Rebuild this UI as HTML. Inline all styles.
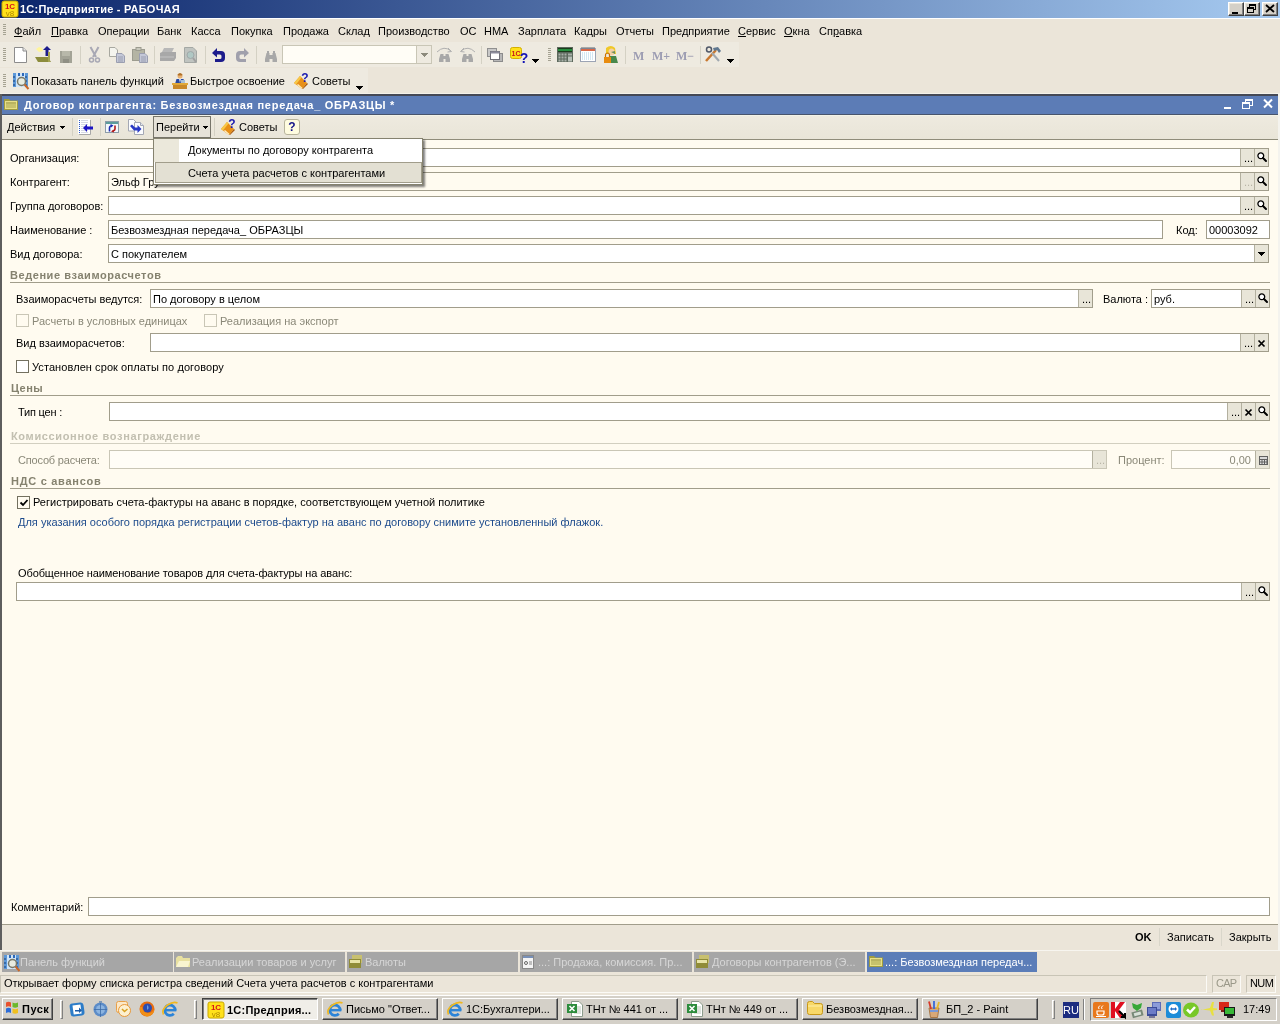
<!DOCTYPE html>
<html lang="ru"><head><meta charset="utf-8"><title>1С:Предприятие - РАБОЧАЯ</title>
<style>
*{box-sizing:border-box}
html,body{margin:0;padding:0}
body{will-change:transform;width:1280px;height:1024px;position:relative;overflow:hidden;background:#ebe5d9;font:11px "Liberation Sans",sans-serif;color:#000}
.a{position:absolute;white-space:nowrap}
.t{position:absolute;white-space:nowrap;line-height:13px;height:13px}
.b{font-weight:bold}
u{text-decoration:underline;text-underline-offset:1px}
svg{position:absolute;overflow:visible}
.wb{position:absolute;top:2px;width:16px;height:14px;background:#d4d0c8;border:1px solid;border-color:#fff #404040 #404040 #fff;box-shadow:inset -1px -1px 0 #808080,inset 1px 1px 0 #ebe5d9}
.grip{position:absolute;width:3px;background:repeating-linear-gradient(180deg,#a5a292 0 1px,transparent 1px 2px)}
.vsep{position:absolute;width:1px;background:#d4d1c4}
.in{position:absolute;background:#fff;border:1px solid #a19d8b;height:19px}
.in.dis{background:#fffdf7;border-color:#c9c6b6}
.in .tx{position:absolute;left:2px;top:3px;line-height:13px;white-space:nowrap}
.btn{position:absolute;top:0;width:15px;height:17px;background:#e8e5d8;border-left:1px solid #b3b09f;text-align:center;line-height:17px;font-size:11px;overflow:hidden}
.sect{position:absolute;font-weight:bold;color:#85826f;line-height:13px;white-space:nowrap}
.hr{position:absolute;height:1px;background:#a19d8b}
.cb{position:absolute;width:13px;height:13px;background:#fff;border:1px solid #73705f}
.cb.dis{border-color:#c9c6b6;background:#fffbf0}
.tab{position:absolute;top:952px;height:20px;background:#a6a6a6;color:#d6d6d6;line-height:20px;overflow:hidden;white-space:nowrap}
.tab span{position:absolute;top:0}
.tk{position:absolute;top:998px;width:116px;height:22px;background:#d4d0c8;border:1px solid;border-color:#fff #404040 #404040 #fff;box-shadow:inset -1px -1px 0 #808080;white-space:nowrap;overflow:hidden}
.tk span{position:absolute;left:23px;top:4px;line-height:13px}
.sunk{position:absolute;border:1px solid;border-color:#c8c4b6 #fbfaf6 #fbfaf6 #c8c4b6}
</style></head><body>
<!-- main window title -->
<div class="a" style="left:0;top:0;width:1280px;height:18px;background:linear-gradient(90deg,#0a246a 0%,#a6caf0 100%)"></div>
<svg style="left:2px;top:1px" width="16" height="16" viewBox="0 0 16 16" ><rect x="0" y="0" width="16" height="16" rx="2" fill="#ffe11a" stroke="#c9a800" stroke-width="1"/><text x="8.0" y="7.5" font-family="Liberation Sans,sans-serif" font-weight="bold" font-size="8" fill="#d8121a" text-anchor="middle">1C</text><text x="8.0" y="14.5" font-family="Liberation Sans,sans-serif" font-size="8" fill="#b08a00" text-anchor="middle">v8</text></svg>
<div class="t b" style="left:20px;top:3px;color:#fff;letter-spacing:.23px" id="ttl">1С:Предприятие - РАБОЧАЯ</div>
<div class="wb" style="left:1228px"><div class="a" style="left:3px;top:9px;width:6px;height:2px;background:#000"></div></div>
<div class="wb" style="left:1244px"><div class="a" style="left:4px;top:1px;width:7px;height:6px;border:1px solid #000;border-top-width:2px"></div><div class="a" style="left:2px;top:4px;width:7px;height:6px;border:1px solid #000;border-top-width:2px;background:#d4d0c8"></div></div>
<div class="wb" style="left:1262px"><svg style="left:3px;top:2px" width="8" height="7" viewBox="0 0 8 7" ><path d="M0 0l8 7M8 0l-8 7" stroke="#000" stroke-width="1.800"/></svg></div>
<!-- menu bar -->
<div class="a" style="left:0;top:18px;width:1280px;height:1px;background:#fff"></div>
<div class="grip" style="left:3px;top:24px;height:12px"></div>
<div class="t" style="left:14px;top:25px" id="m0"><u>Ф</u>айл</div>
<div class="t" style="left:51px;top:25px" id="m1"><u>П</u>равка</div>
<div class="t" style="left:98px;top:25px" id="m2">Операции</div>
<div class="t" style="left:157px;top:25px" id="m3">Банк</div>
<div class="t" style="left:191px;top:25px" id="m4">Касса</div>
<div class="t" style="left:231px;top:25px" id="m5">Покупка</div>
<div class="t" style="left:283px;top:25px" id="m6">Продажа</div>
<div class="t" style="left:338px;top:25px" id="m7">Склад</div>
<div class="t" style="left:378px;top:25px" id="m8">Производство</div>
<div class="t" style="left:460px;top:25px" id="m9">ОС</div>
<div class="t" style="left:484px;top:25px" id="m10">НМА</div>
<div class="t" style="left:518px;top:25px" id="m11">Зарплата</div>
<div class="t" style="left:574px;top:25px" id="m12">Кадры</div>
<div class="t" style="left:616px;top:25px" id="m13">Отчеты</div>
<div class="t" style="left:662px;top:25px" id="m14">Предприятие</div>
<div class="t" style="left:738px;top:25px" id="m15"><u>С</u>ервис</div>
<div class="t" style="left:784px;top:25px" id="m16"><u>О</u>кна</div>
<div class="t" style="left:819px;top:25px" id="m17">Сп<u>р</u>авка</div>
<!-- toolbar 1 -->
<div class="a" style="left:0;top:42px;width:739px;height:25px;background:#eeeae0"></div>
<div class="grip" style="left:3px;top:48px;height:13px"></div>
<svg style="left:14px;top:47px" width="13" height="16" viewBox="0 0 13 16" ><path d="M0.5 0.5H9L12.5 4V15.5H0.5Z" fill="#fff" stroke="#8c8c8c"/><path d="M9 0.5V4H12.5" fill="#e8e8e8" stroke="#8c8c8c"/></svg>
<svg style="left:35px;top:46px" width="17" height="17" viewBox="0 0 17 17" ><path d="M1 3l3-2 3 1 1 3-4 1z" fill="#fff59a"/><path d="M12 0l4 4h-2.5v6h-3V4H8z" fill="#1c1c8c"/><path d="M0 11h13l3 5H3z" fill="#8c8c3c"/><path d="M13 11V6h2v10h-2z" fill="#a5a550"/></svg>
<svg style="left:60px;top:51px" width="12" height="12" viewBox="0 0 12 12" ><rect x="0" y="0" width="12" height="12" fill="#a3a396"/><rect x="2" y="0" width="8" height="5" fill="#b8b8aa"/><rect x="3" y="8" width="6" height="4" fill="#8f8f84"/></svg>
<div class="vsep" style="left:80px;top:46px;height:18px"></div>
<svg style="left:89px;top:47px" width="11" height="16" viewBox="0 0 11 16" ><path d="M1.5 0L7 10M9.5 0L4 10" stroke="#a8a8b4" stroke-width="2" fill="none"/><circle cx="2.5" cy="13" r="2" fill="none" stroke="#a8a8b4" stroke-width="1.5"/><circle cx="8.5" cy="13" r="2" fill="none" stroke="#a8a8b4" stroke-width="1.5"/></svg>
<svg style="left:109px;top:47px" width="16" height="16" viewBox="0 0 16 16" ><path d="M0.5 0.5H6L8.5 3V9.5H0.5Z" fill="#f4f4ee" stroke="#a8a8a0"/><path d="M7.500 6.500H13L15.500 9V15.500H7.500Z" fill="#c4c8d8" stroke="#9a9eb0"/><path d="M9 10h5M9 12h5M9 14h5" stroke="#9a9eb0"/></svg>
<svg style="left:132px;top:47px" width="16" height="16" viewBox="0 0 16 16" ><rect x="0.5" y="2.500" width="12" height="11" fill="#b4b4a4" stroke="#9c9c90"/><rect x="4" y="0.5" width="5" height="3" fill="#c8c8bc" stroke="#9c9c90"/><path d="M7.500 6.500H13L15.500 9V15.500H7.500Z" fill="#c4c8d8" stroke="#9a9eb0"/><path d="M9 10h5M9 12h5M9 14h5" stroke="#9a9eb0"/></svg>
<div class="vsep" style="left:154px;top:46px;height:18px"></div>
<svg style="left:160px;top:48px" width="16" height="13" viewBox="0 0 16 13" ><path d="M4 0h10l-2 4H2z" fill="#b8b8b8"/><path d="M0 5l2-1h14v6l-2 3H0z" fill="#a8a8a8"/><path d="M0 9h14" stroke="#c4c4c4"/></svg>
<svg style="left:184px;top:47px" width="13" height="16" viewBox="0 0 13 16" ><path d="M0.5 0.5H9L12.5 4V15.5H0.5Z" fill="#c0c4c0" stroke="#a4a8a4"/><circle cx="6.500" cy="8" r="3.500" fill="#b0c8c4" stroke="#a0a8a8"/><path d="M9 11l3 4" stroke="#a0a0a0" stroke-width="2"/></svg>
<div class="vsep" style="left:205px;top:46px;height:18px"></div>
<svg style="left:212px;top:48px" width="13" height="14" viewBox="0 0 13 14" ><path d="M5 0v3h4a4 4 0 0 1 4 4v3a4 4 0 0 1-4 4H3v-3h5a1.500 1.500 0 0 0 1.500-1.500v-1.500a1.500 1.500 0 0 0-1.500-1.500H5v3L0 5z" fill="#1c1c8c"/></svg>
<svg style="left:236px;top:48px" width="13" height="14" viewBox="0 0 13 14" ><g transform="translate(13 0) scale(-1 1)"><path d="M5 0v3h4a4 4 0 0 1 4 4v3a4 4 0 0 1-4 4H3v-3h5a1.500 1.500 0 0 0 1.500-1.500v-1.500a1.500 1.500 0 0 0-1.500-1.500H5v3L0 5z" fill="#a0a0ac"/></g></svg>
<div class="vsep" style="left:256px;top:46px;height:18px"></div>
<svg style="left:265px;top:51px" width="12" height="11" viewBox="0 0 12 11" ><path d="M1.500 2h3v2h3V2h3l1.500 6v3H7.500V8h-3v3H0V8z" fill="#a8a8a8"/><rect x="2" y="0" width="2" height="2" fill="#a8a8a8"/><rect x="8" y="0" width="2" height="2" fill="#a8a8a8"/></svg>
<div class="a" style="left:282px;top:45px;width:150px;height:19px;background:#fffdf6;border:1px solid #c9c6b6"><div class="a" style="right:0;top:0;width:15px;height:17px;background:#eeeae0;border-left:1px solid #c9c6b6"></div></div>
<svg style="left:421px;top:53px" width="7" height="4" viewBox="0 0 7 4" shape-rendering="crispEdges"><path d="M0 0h7l-3.5 4z" fill="#8c8a7c"/></svg>
<svg style="left:436px;top:47px" width="17" height="15" viewBox="0 0 17 15" ><path d="M1 5Q8 -2 15 4" fill="none" stroke="#b0b0b0"/><path d="M12 1l3.500 3.500-4 0.500" fill="none" stroke="#b0b0b0"/><g transform="translate(3 5)"><path d="M1.500 2h3v2h2V2h3l1.500 5v3H6.500V7h-2v3H0V7z" fill="#a8a8a8"/></g></svg>
<svg style="left:459px;top:47px" width="17" height="15" viewBox="0 0 17 15" ><g transform="translate(17 0) scale(-1 1)"><path d="M1 5Q8 -2 15 4" fill="none" stroke="#b0b0b0"/><path d="M12 1l3.500 3.500-4 0.500" fill="none" stroke="#b0b0b0"/></g><g transform="translate(3 5)"><path d="M1.500 2h3v2h2V2h3l1.500 5v3H6.500V7h-2v3H0V7z" fill="#a8a8a8"/></g></svg>
<div class="vsep" style="left:481px;top:46px;height:18px"></div>
<svg style="left:487px;top:48px" width="16" height="14" viewBox="0 0 16 14" ><rect x="0.5" y="0.5" width="9" height="8" fill="#c8c8c8" stroke="#909090"/><rect x="6.500" y="5.500" width="9" height="8" fill="#b8b8b8" stroke="#8c8c8c"/><rect x="3.500" y="3.500" width="9" height="8" fill="#fff" stroke="#707078"/><rect x="3.500" y="3.500" width="9" height="2" fill="#8c8c9c"/></svg>
<svg style="left:510px;top:47px" width="18" height="16" viewBox="0 0 18 16" ><rect x="0.5" y="0.5" width="11" height="11" rx="2" fill="#ffe11a" stroke="#d4b000"/><text x="6" y="8.500" font-family="Liberation Sans,sans-serif" font-weight="bold" font-size="7" fill="#c8141c" text-anchor="middle">1C</text><text x="14" y="15.500" font-family="Liberation Sans,sans-serif" font-weight="bold" font-size="14" fill="#1414b4" text-anchor="middle">?</text></svg>
<svg style="left:532px;top:59px" width="7" height="4" viewBox="0 0 7 4" shape-rendering="crispEdges"><path d="M0 0h7l-3.5 4z" fill="#000"/></svg>
<div class="grip" style="left:548px;top:48px;height:13px"></div>
<svg style="left:557px;top:47px" width="16" height="15" viewBox="0 0 16 15" ><rect x="0" y="0" width="16" height="15" fill="#5c685c"/><rect x="1" y="1" width="14" height="4" fill="#1c3c1c"/><path d="M2 2v2M4 2v2M6 2v2M8 2v2M10 2v2M12 2v2M14 2v2" stroke="#30e060"/><rect x="1.5" y="6.5" width="2" height="2" fill="#a8b0a8"/><rect x="4.5" y="6.5" width="2" height="2" fill="#a8b0a8"/><rect x="7.5" y="6.5" width="2" height="2" fill="#a8b0a8"/><rect x="1.5" y="9.5" width="2" height="2" fill="#a8b0a8"/><rect x="4.5" y="9.5" width="2" height="2" fill="#a8b0a8"/><rect x="7.5" y="9.5" width="2" height="2" fill="#a8b0a8"/><rect x="1.5" y="12.5" width="2" height="2" fill="#a8b0a8"/><rect x="4.5" y="12.5" width="2" height="2" fill="#a8b0a8"/><rect x="7.5" y="12.5" width="2" height="2" fill="#a8b0a8"/><rect x="11" y="6.500" width="4" height="2" fill="#a8b0a8"/><rect x="11" y="9.500" width="4" height="5" fill="#b8c0b8"/></svg>
<svg style="left:580px;top:47px" width="16" height="15" viewBox="0 0 16 15" ><rect x="0.5" y="1.500" width="15" height="13" fill="#fff" stroke="#9ca4b4"/><rect x="1" y="2" width="14" height="2" fill="#d86848"/><path d="M2 0v2M4 0v2M6 0v2M8 0v2M10 0v2M12 0v2M14 0v2" stroke="#606870"/><rect x="2" y="5.5" width="1" height="1" fill="#a8d0e8"/><rect x="4" y="5.5" width="1" height="1" fill="#a8d0e8"/><rect x="6" y="5.5" width="1" height="1" fill="#a8d0e8"/><rect x="8" y="5.5" width="1" height="1" fill="#a8d0e8"/><rect x="10" y="5.5" width="1" height="1" fill="#a8d0e8"/><rect x="12" y="5.5" width="1" height="1" fill="#a8d0e8"/><rect x="2" y="7.5" width="1" height="1" fill="#a8d0e8"/><rect x="4" y="7.5" width="1" height="1" fill="#a8d0e8"/><rect x="6" y="7.5" width="1" height="1" fill="#a8d0e8"/><rect x="8" y="7.5" width="1" height="1" fill="#a8d0e8"/><rect x="10" y="7.5" width="1" height="1" fill="#a8d0e8"/><rect x="12" y="7.5" width="1" height="1" fill="#a8d0e8"/><rect x="2" y="9.5" width="1" height="1" fill="#a8d0e8"/><rect x="4" y="9.5" width="1" height="1" fill="#a8d0e8"/><rect x="6" y="9.5" width="1" height="1" fill="#a8d0e8"/><rect x="8" y="9.5" width="1" height="1" fill="#a8d0e8"/><rect x="10" y="9.5" width="1" height="1" fill="#a8d0e8"/><rect x="12" y="9.5" width="1" height="1" fill="#a8d0e8"/><rect x="2" y="11.5" width="1" height="1" fill="#a8d0e8"/><rect x="4" y="11.5" width="1" height="1" fill="#a8d0e8"/><rect x="6" y="11.5" width="1" height="1" fill="#a8d0e8"/><rect x="8" y="11.5" width="1" height="1" fill="#a8d0e8"/><rect x="10" y="11.5" width="1" height="1" fill="#a8d0e8"/><rect x="12" y="11.5" width="1" height="1" fill="#a8d0e8"/></svg>
<svg style="left:603px;top:46px" width="15" height="17" viewBox="0 0 15 17" ><path d="M3 2q5-4 9 0l1 6H3z" fill="#f0c828"/><ellipse cx="8.500" cy="6" rx="3" ry="3.500" fill="#f4d0a8"/><path d="M8 6l4-1v3z" fill="#70905c"/><path d="M6 10h7l2 7H6z" fill="#48884c"/><rect x="1" y="11" width="7" height="6" fill="#e88c10"/><path d="M2.500 11v-2a2 2 0 0 1 4 0v2" fill="none" stroke="#c87008" stroke-width="1.200"/></svg>
<div class="vsep" style="left:625px;top:46px;height:18px"></div>
<div class="t b" style="left:633px;top:49px;font:bold 12px 'Liberation Serif',serif;color:#9c9cb2">M</div>
<div class="t b" style="left:652px;top:49px;font:bold 12px 'Liberation Serif',serif;color:#9c9cb2">M+</div>
<div class="t b" style="left:676px;top:49px;font:bold 12px 'Liberation Serif',serif;color:#9c9cb2">M−</div>
<div class="vsep" style="left:700px;top:46px;height:18px"></div>
<svg style="left:705px;top:46px" width="17" height="16" viewBox="0 0 17 16" ><path d="M1 15L11 4" stroke="#c87830" stroke-width="2.500"/><path d="M8 2l5-1 3 4-2 2-2-3-3 1z" fill="#607890"/><path d="M14 15L7 7" stroke="#a0a8b0" stroke-width="2"/><circle cx="4" cy="3.500" r="2.500" fill="none" stroke="#505868" stroke-width="1.500"/></svg>
<svg style="left:727px;top:59px" width="7" height="4" viewBox="0 0 7 4" shape-rendering="crispEdges"><path d="M0 0h7l-3.5 4z" fill="#000"/></svg>
<!-- toolbar 2 -->
<div class="a" style="left:0;top:68px;width:368px;height:25px;background:#eeeae0"></div>
<div class="grip" style="left:3px;top:74px;height:13px"></div>
<svg style="left:13px;top:73px" width="16" height="17" viewBox="0 0 16 17" ><rect x="0" y="0" width="15" height="14" fill="#cfe4f8"/><rect x="0" y="0" width="3" height="14" fill="#5c98d8"/><rect x="12" y="0" width="3" height="14" fill="#5c98d8"/><rect x="5" y="0" width="2" height="3" fill="#2c68b8"/><rect x="9" y="0" width="2" height="3" fill="#2c68b8"/><path d="M1 3v2M1 7v2M1 11v2M13 3v2M13 7v2M13 11v2" stroke="#143c78"/><circle cx="8.500" cy="8.500" r="4" fill="#e8ece0" stroke="#787868" stroke-width="1.500"/><path d="M11.500 11.500L15.500 16" stroke="#c86828" stroke-width="2"/></svg>
<div class="t" style="left:31px;top:75px" id="tb2a">Показать панель функций</div>
<svg style="left:172px;top:73px" width="16" height="16" viewBox="0 0 16 16" ><circle cx="8" cy="3" r="2.500" fill="#e8b070"/><path d="M5.500 1.500q2.500-3 5 0l-0.500 1h-4z" fill="#b07028"/><path d="M3 11l1.500-5h7L13 11z" fill="#2848a0"/><path d="M7 6l1 4 1-4z" fill="#d8e4f4"/><rect x="0" y="10" width="16" height="2" fill="#e0a838"/><rect x="1" y="12" width="14" height="4" fill="#c88828"/><rect x="9" y="7" width="4" height="3" fill="#a8c0d8"/></svg>
<div class="t" style="left:190px;top:75px" id="tb2b">Быстрое освоение</div>
<svg style="left:294px;top:73px" width="16" height="16" viewBox="0 0 16 16" ><path d="M0 10L6 3l7 7-5 6z" fill="#e89018"/><path d="M0 10l6-7 1.500 1.500L2 11.500z" fill="#f8c848"/><path d="M8 16l5-6 1 1-5 5z" fill="#a85808"/><path d="M3 12l5 4 0.500-1-4.500-4z" fill="#fff0c0"/><text x="11" y="9" font-family="Liberation Sans,sans-serif" font-weight="bold" font-size="12" fill="#1818b0" text-anchor="middle">?</text></svg>
<div class="t" style="left:312px;top:75px" id="tb2c">Советы</div>
<svg style="left:356px;top:86px" width="7" height="4" viewBox="0 0 7 4" shape-rendering="crispEdges"><path d="M0 0h7l-3.5 4z" fill="#000"/></svg>
<!-- inner window -->
<div class="a" style="left:0;top:93px;width:1280px;height:1px;background:#f4f2ea"></div>
<div class="a" style="left:0;top:94px;width:1278px;height:2px;background:#454955"></div>
<div class="a" style="left:0;top:94px;width:2px;height:856px;background:#5e5e5e"></div>
<div class="a" style="left:1278px;top:94px;width:2px;height:856px;background:#f4f3ee"></div>
<div class="a" style="left:2px;top:96px;width:1276px;height:19px;background:#5c7cb6;border-bottom:1px solid #48546c"></div>
<svg style="left:4px;top:98px" width="14" height="12" viewBox="0 0 14 12" ><path d="M0 1h5l1.500 1.500H14V12H0z" fill="#a09c40"/><rect x="1" y="3" width="12" height="8" fill="#e8e088"/><rect x="2" y="4.500" width="10" height="1" fill="#8c8838"/><rect x="2" y="6.500" width="10" height="1" fill="#a8a450"/><rect x="2" y="8.500" width="10" height="1" fill="#a8a450"/></svg>
<div class="t b" style="left:24px;top:99px;color:#fff;letter-spacing:.72px" id="ittl">Договор контрагента: Безвозмездная передача_ ОБРАЗЦЫ *</div>
<div class="a" style="left:1224px;top:107px;width:7px;height:2px;background:#fff"></div>
<div class="a" style="left:1245px;top:99px;width:8px;height:7px;border:1px solid #fff;border-top-width:2px"></div><div class="a" style="left:1242px;top:102px;width:8px;height:7px;border:1px solid #fff;border-top-width:2px;background:#5b7db8"></div>
<svg style="left:1263px;top:99px" width="10" height="9" viewBox="0 0 10 9" ><path d="M1 0.5l8 8M9 0.5l-8 8" stroke="#fff" stroke-width="2"/></svg>
<div class="a" style="left:2px;top:115px;width:1276px;height:25px;background:linear-gradient(180deg,#eeeadf 0%,#e9e5d8 100%);border-top:1px solid #f3f3e8;border-bottom:1px solid #8f8c7a"></div>
<div class="t" style="left:7px;top:121px" id="ft1">Действия</div>
<svg style="left:60px;top:126px" width="5" height="3" viewBox="0 0 5 3" shape-rendering="crispEdges"><path d="M0 0h5l-2.5 3z" fill="#000"/></svg>
<div class="vsep" style="left:72px;top:118px;height:18px"></div>
<svg style="left:77px;top:119px" width="16" height="16" viewBox="0 0 16 16" ><rect x="1" y="0" width="12" height="15" fill="#fff"/><path d="M13.500 1v14.500H2" fill="none" stroke="#a8a8a8"/><rect x="2" y="1" width="1" height="1" fill="#2c58c8"/><rect x="4" y="1" width="7" height="1" fill="#d4d8e4"/><rect x="2" y="3" width="1" height="1" fill="#2c58c8"/><rect x="4" y="3" width="7" height="1" fill="#d4d8e4"/><rect x="2" y="5" width="1" height="1" fill="#2c58c8"/><rect x="4" y="5" width="7" height="1" fill="#d4d8e4"/><rect x="2" y="7" width="1" height="1" fill="#2c58c8"/><rect x="4" y="7" width="7" height="1" fill="#d4d8e4"/><rect x="2" y="9" width="1" height="1" fill="#2c58c8"/><rect x="4" y="9" width="7" height="1" fill="#d4d8e4"/><rect x="2" y="11" width="1" height="1" fill="#2c58c8"/><rect x="4" y="11" width="7" height="1" fill="#d4d8e4"/><rect x="2" y="13" width="1" height="1" fill="#2c58c8"/><rect x="4" y="13" width="7" height="1" fill="#d4d8e4"/><path d="M6 9l4-4v2.500h6v3h-6V13z" fill="#1c14c4"/></svg>
<div class="vsep" style="left:100px;top:118px;height:18px"></div>
<svg style="left:105px;top:121px" width="14" height="12" viewBox="0 0 14 12" ><rect x="0.500" y="0.500" width="13" height="11" fill="#f4f8fc" stroke="#8c9ca8"/><rect x="1" y="1" width="12" height="2" fill="#5c9c9c"/><path d="M4.500 10.500V7q0-2 2.500-2.500" fill="none" stroke="#1c2cb4" stroke-width="1.600"/><path d="M5.500 3l3 1.500-2.500 2z" fill="#1c2cb4"/><path d="M10 4.500V8q0 1.500-2 2" fill="none" stroke="#b01818" stroke-width="1.600"/><path d="M9 11.500l-3-1 2.500-2z" fill="#b01818"/></svg>
<svg style="left:128px;top:119px" width="16" height="16" viewBox="0 0 16 16" ><path d="M0.500 0.500H5.500L8 3V12H0.500Z" fill="#fbfcfe" stroke="#a4a8b4"/><path d="M6.500 3.500H12.500L15.500 6.500V15.500H6.500Z" fill="#fbfcfe" stroke="#a4a8b4"/><path d="M12.500 3.500V6.500H15.500" fill="#e4e8f0" stroke="#a4a8b4"/><path d="M2 7l2-1.500 3 3h2.500V6l4 4-4 4v-2.500H6z" fill="#2838c4"/></svg>
<div class="a" style="left:153px;top:116px;width:58px;height:22px;background:#e6e2d8;border:1px solid #77756a"></div>
<div class="t" style="left:156px;top:121px" id="ft2">Перейти</div>
<svg style="left:203px;top:126px" width="5" height="3" viewBox="0 0 5 3" shape-rendering="crispEdges"><path d="M0 0h5l-2.5 3z" fill="#000"/></svg>
<div class="vsep" style="left:214px;top:118px;height:18px"></div>
<svg style="left:221px;top:119px" width="16" height="16" viewBox="0 0 16 16" ><path d="M0 10L6 3l7 7-5 6z" fill="#e89018"/><path d="M0 10l6-7 1.500 1.500L2 11.500z" fill="#f8c848"/><path d="M8 16l5-6 1 1-5 5z" fill="#a85808"/><path d="M3 12l5 4 0.500-1-4.500-4z" fill="#fff0c0"/><text x="11" y="9" font-family="Liberation Sans,sans-serif" font-weight="bold" font-size="12" fill="#1818b0" text-anchor="middle">?</text></svg>
<div class="t" style="left:239px;top:121px" id="ft3">Советы</div>
<div class="a" style="left:284px;top:119px;width:16px;height:16px;background:#fffce0;border:1px solid #b8b49c;border-radius:3px;text-align:center;line-height:14px;font-weight:bold;font-size:12px;color:#141488">?</div>
<div class="a" style="left:2px;top:140px;width:1276px;height:784px;background:#fffbf0"></div>
<div class="t" style="left:10px;top:152px" id="l1">Организация:</div>
<div class="in" style="left:108px;top:148px;width:1161px;height:19px"><div class="btn" style="left:1131px;width:14px"><span style="position:absolute;left:3px;top:1px">...</span></div><div class="btn" style="left:1145px;width:14px"><svg style="left:2px;top:3px" width="10" height="10" viewBox="0 0 10 10" ><circle cx="3.800" cy="3.800" r="2.900" fill="#fff" stroke="#000" stroke-width="1.300"/><path d="M6 6l3 3" stroke="#000" stroke-width="2" stroke-linecap="round"/></svg></div></div>
<div class="t" style="left:10px;top:176px" id="l2">Контрагент:</div>
<div class="in" style="left:108px;top:172px;width:1161px;height:19px;background:#fffbf0"><div class="tx" style="" id="f2">Эльф Гру</div><div class="btn" style="left:1131px;width:14px"><span style="position:absolute;left:3px;top:1px;color:#b8b5a6">...</span></div><div class="btn" style="left:1145px;width:14px"><svg style="left:2px;top:3px" width="10" height="10" viewBox="0 0 10 10" ><circle cx="3.800" cy="3.800" r="2.900" fill="#fff" stroke="#000" stroke-width="1.300"/><path d="M6 6l3 3" stroke="#000" stroke-width="2" stroke-linecap="round"/></svg></div></div>
<div class="t" style="left:10px;top:200px" id="l3">Группа договоров:</div>
<div class="in" style="left:108px;top:196px;width:1161px;height:19px"><div class="btn" style="left:1131px;width:14px"><span style="position:absolute;left:3px;top:1px">...</span></div><div class="btn" style="left:1145px;width:14px"><svg style="left:2px;top:3px" width="10" height="10" viewBox="0 0 10 10" ><circle cx="3.800" cy="3.800" r="2.900" fill="#fff" stroke="#000" stroke-width="1.300"/><path d="M6 6l3 3" stroke="#000" stroke-width="2" stroke-linecap="round"/></svg></div></div>
<div class="t" style="left:10px;top:224px" id="l4">Наименование :</div>
<div class="in" style="left:108px;top:220px;width:1055px;height:19px"><div class="tx" style="" id="f4">Безвозмездная передача_ ОБРАЗЦЫ</div></div>
<div class="t" style="left:1176px;top:224px" id="l4b">Код:</div>
<div class="in" style="left:1206px;top:220px;width:64px;height:19px"><div class="tx" style="" id="f4b">00003092</div></div>
<div class="t" style="left:10px;top:248px" id="l5">Вид договора:</div>
<div class="in" style="left:108px;top:244px;width:1161px;height:19px"><div class="tx" style="" id="f5">С покупателем</div><div class="btn" style="left:1145px;width:14px"><svg style="left:3px;top:7px" width="7" height="4" viewBox="0 0 7 4" shape-rendering="crispEdges"><path d="M0 0h7l-3.5 4z" fill="#000"/></svg></div></div>
<div class="sect" style="left:10px;top:269px;letter-spacing:.56px" id="s1">Ведение взаиморасчетов</div><div class="hr" style="left:10px;top:282px;width:1260px"></div>
<div class="t" style="left:16px;top:293px" id="l6">Взаиморасчеты ведутся:</div>
<div class="in" style="left:150px;top:289px;width:943px;height:19px"><div class="tx" style="" id="f6">По договору в целом</div><div class="btn" style="left:927px;width:14px"><span style="position:absolute;left:3px;top:1px">...</span></div></div>
<div class="t" style="left:1103px;top:293px" id="l6b">Валюта :</div>
<div class="in" style="left:1151px;top:289px;width:119px;height:19px"><div class="tx" style="" id="f6b">руб.</div><div class="btn" style="left:89px;width:14px"><span style="position:absolute;left:3px;top:1px">...</span></div><div class="btn" style="left:103px;width:14px"><svg style="left:2px;top:3px" width="10" height="10" viewBox="0 0 10 10" ><circle cx="3.800" cy="3.800" r="2.900" fill="#fff" stroke="#000" stroke-width="1.300"/><path d="M6 6l3 3" stroke="#000" stroke-width="2" stroke-linecap="round"/></svg></div></div>
<div class="cb dis" style="left:16px;top:314px"></div><div class="t" style="left:32px;top:315px;color:#8a8878" id="c1">Расчеты в условных единицах</div>
<div class="cb dis" style="left:204px;top:314px"></div><div class="t" style="left:220px;top:315px;color:#8a8878" id="c2">Реализация на экспорт</div>
<div class="t" style="left:16px;top:337px" id="l8">Вид взаиморасчетов:</div>
<div class="in" style="left:150px;top:333px;width:1119px;height:19px"><div class="btn" style="left:1089px;width:14px"><span style="position:absolute;left:3px;top:1px">...</span></div><div class="btn" style="left:1103px;width:14px"><svg style="left:3px;top:6px" width="7" height="7" viewBox="0 0 7 7" ><path d="M0.500 0.500l6 6M6.500 0.500l-6 6" stroke="#000" stroke-width="1.700"/></svg></div></div>
<div class="cb" style="left:16px;top:360px"></div><div class="t" style="left:32px;top:361px;letter-spacing:0.08px" id="c3">Установлен срок оплаты по договору</div>
<div class="sect" style="left:11px;top:382px;letter-spacing:.42px" id="s2">Цены</div><div class="hr" style="left:10px;top:395px;width:1260px"></div>
<div class="t" style="left:18px;top:406px;letter-spacing:-0.2px" id="l10">Тип цен :</div>
<div class="in" style="left:109px;top:402px;width:1161px;height:19px"><div class="btn" style="left:1117px;width:14px"><span style="position:absolute;left:3px;top:1px">...</span></div><div class="btn" style="left:1131px;width:14px"><svg style="left:3px;top:6px" width="7" height="7" viewBox="0 0 7 7" ><path d="M0.500 0.500l6 6M6.500 0.500l-6 6" stroke="#000" stroke-width="1.700"/></svg></div><div class="btn" style="left:1145px;width:14px"><svg style="left:2px;top:3px" width="10" height="10" viewBox="0 0 10 10" ><circle cx="3.800" cy="3.800" r="2.900" fill="#fff" stroke="#000" stroke-width="1.300"/><path d="M6 6l3 3" stroke="#000" stroke-width="2" stroke-linecap="round"/></svg></div></div>
<div class="sect" style="left:11px;top:430px;color:#c2bfb0;letter-spacing:.65px" id="s3">Комиссионное вознаграждение</div><div class="hr" style="left:10px;top:443px;width:1260px;background:#d2cfc0"></div>
<div class="t" style="left:18px;top:454px;color:#8a8878;letter-spacing:-0.18px" id="l11">Способ расчета:</div>
<div class="in dis" style="left:109px;top:450px;width:998px;height:19px"><div class="btn" style="left:982px;width:14px"><span style="position:absolute;left:3px;top:1px;color:#b8b5a6">...</span></div></div>
<div class="t" style="left:1118px;top:454px;color:#8a8878" id="l11b">Процент:</div>
<div class="in dis" style="left:1171px;top:450px;width:99px;height:19px"><div class="tx" style="left:auto;right:18px;color:#8a8878">0,00</div><div class="btn" style="left:83px;width:14px"><svg style="left:3px;top:5px" width="9" height="9" viewBox="0 0 9 9" ><rect x="0" y="0" width="9" height="9" fill="#606060"/><rect x="1" y="1" width="7" height="2" fill="#d8d8d8"/><rect x="1.0" y="4.0" width="1.500" height="1.500" fill="#e0e0e0"/><rect x="3.5" y="4.0" width="1.500" height="1.500" fill="#e0e0e0"/><rect x="6.0" y="4.0" width="1.500" height="1.500" fill="#e0e0e0"/><rect x="1.0" y="6.5" width="1.500" height="1.500" fill="#e0e0e0"/><rect x="3.5" y="6.5" width="1.500" height="1.500" fill="#e0e0e0"/><rect x="6.0" y="6.5" width="1.500" height="1.500" fill="#e0e0e0"/></svg></div></div>
<div class="sect" style="left:11px;top:475px;letter-spacing:.72px" id="s4">НДС с авансов</div><div class="hr" style="left:10px;top:488px;width:1260px"></div>
<div class="cb" style="left:17px;top:496px;background:#fffbf0"><svg style="left:2px;top:2px" width="8" height="8" viewBox="0 0 8 8" ><path d="M0.5 3.500l2.500 2.500L7.500 1" fill="none" stroke="#000" stroke-width="1.800"/></svg></div><div class="t" style="left:33px;top:496px" id="c4">Регистрировать счета-фактуры на аванс в порядке, соответствующем учетной политике</div>
<div class="t" style="left:18px;top:516px;color:#1c4a8c" id="bl">Для указания особого порядка регистрации счетов-фактур на аванс по договору снимите установленный флажок.</div>
<div class="t" style="left:18px;top:567px;letter-spacing:-0.1px" id="l14">Обобщенное наименование товаров для счета-фактуры на аванс:</div>
<div class="in" style="left:16px;top:582px;width:1254px;height:19px"><div class="btn" style="left:1224px;width:14px"><span style="position:absolute;left:3px;top:1px">...</span></div><div class="btn" style="left:1238px;width:14px"><svg style="left:2px;top:3px" width="10" height="10" viewBox="0 0 10 10" ><circle cx="3.800" cy="3.800" r="2.900" fill="#fff" stroke="#000" stroke-width="1.300"/><path d="M6 6l3 3" stroke="#000" stroke-width="2" stroke-linecap="round"/></svg></div></div>
<div class="t" style="left:11px;top:901px" id="l16">Комментарий:</div>
<div class="in" style="left:88px;top:897px;width:1182px;height:19px"></div>
<div class="a" style="left:2px;top:924px;width:1276px;height:1px;background:#a19d8b"></div>
<div class="a" style="left:2px;top:925px;width:1276px;height:25px;background:#ebe5d9"></div>
<div class="t b" style="left:1135px;top:931px" id="ok">OK</div>
<div class="vsep" style="left:1159px;top:928px;height:18px;background:#d9d6ca"></div>
<div class="t" style="left:1167px;top:931px" id="wr">Записать</div>
<div class="vsep" style="left:1221px;top:928px;height:18px;background:#d9d6ca"></div>
<div class="t" style="left:1229px;top:931px" id="cl">Закрыть</div>
<!-- dropdown menu -->
<div class="a" style="left:153px;top:138px;width:270px;height:47px;background:#fff;border:1px solid #85826f;box-shadow:2px 2px 2px rgba(0,0,0,.5)"></div>
<div class="a" style="left:154px;top:139px;width:25px;height:23px;background:#ebe8db"></div>
<div class="a" style="left:155px;top:162px;width:267px;height:21px;background:#e3e0d3;border:1px solid #a19d8b"></div>
<div class="t" style="left:188px;top:144px" id="mi1">Документы по договору контрагента</div>
<div class="t" style="left:188px;top:167px" id="mi2">Счета учета расчетов с контрагентами</div>
<!-- window tabs -->
<div class="a" style="left:0;top:950px;width:1280px;height:1px;background:#f7f5ef"></div>
<div class="tab" style="left:2px;width:171px"><svg style="left:2px;top:3px" width="16" height="17" viewBox="0 0 16 17" ><rect x="0" y="0" width="15" height="14" fill="#cfe4f8"/><rect x="0" y="0" width="3" height="14" fill="#5c98d8"/><rect x="12" y="0" width="3" height="14" fill="#5c98d8"/><rect x="5" y="0" width="2" height="3" fill="#2c68b8"/><rect x="9" y="0" width="2" height="3" fill="#2c68b8"/><path d="M1 3v2M1 7v2M1 11v2M13 3v2M13 7v2M13 11v2" stroke="#143c78"/><circle cx="8.500" cy="8.500" r="4" fill="#e8ece0" stroke="#787868" stroke-width="1.500"/><path d="M11.500 11.500L15.500 16" stroke="#c86828" stroke-width="2"/></svg><span style="left:18px" id="tab0">Панель функций</span></div>
<div class="tab" style="left:174px;width:171px"><svg style="left:2px;top:3px" width="14" height="12" viewBox="0 0 14 12" ><path d="M0 3l2-2h4l1 2h7v9H0z" fill="#e8e0a0"/><path d="M0 12l3-6h11l-2 6z" fill="#f8f4d0"/></svg><span style="left:18px" id="tab1">Реализации товаров и услуг</span></div>
<div class="tab" style="left:347px;width:171px"><svg style="left:2px;top:3px" width="14" height="14" viewBox="0 0 14 14" ><rect x="3" y="0" width="10" height="8" fill="#c8c070"/><rect x="0" y="4" width="12" height="9" fill="#908c38"/><rect x="1" y="5" width="10" height="3" fill="#e8e4a8"/></svg><span style="left:18px" id="tab2">Валюты</span></div>
<div class="tab" style="left:520px;width:172px"><svg style="left:2px;top:3px" width="12" height="14" viewBox="0 0 12 14" ><rect x="0.500" y="0.500" width="11" height="13" fill="#f4f4f4" stroke="#888"/><rect x="1" y="1" width="10" height="2" fill="#7890b8"/><circle cx="4" cy="8" r="1.500" fill="none" stroke="#666"/><path d="M7 7h3M7 9h3" stroke="#888"/></svg><span style="left:18px" id="tab3">...: Продажа, комиссия. Пр...</span></div>
<div class="tab" style="left:694px;width:171px"><svg style="left:2px;top:3px" width="14" height="14" viewBox="0 0 14 14" ><rect x="3" y="0" width="10" height="8" fill="#c8c070"/><rect x="0" y="4" width="12" height="9" fill="#908c38"/><rect x="1" y="5" width="10" height="3" fill="#e8e4a8"/></svg><span style="left:18px" id="tab4">Договоры контрагентов (Э...</span></div>
<div class="tab" style="left:867px;width:170px;background:#5b7db8;color:#fff"><svg style="left:2px;top:3px" width="14" height="12" viewBox="0 0 14 12" ><path d="M0 1h5l1.500 1.500H14V12H0z" fill="#a09c40"/><rect x="1" y="3" width="12" height="8" fill="#e8e088"/><rect x="2" y="4.500" width="10" height="1" fill="#8c8838"/><rect x="2" y="6.500" width="10" height="1" fill="#a8a450"/><rect x="2" y="8.500" width="10" height="1" fill="#a8a450"/></svg><span style="left:18px" id="tab5">...: Безвозмездная передач...</span></div>
<!-- status bar -->
<div class="sunk" style="left:0;top:975px;width:1207px;height:18px"></div>
<div class="t" style="left:4px;top:977px" id="st">Открывает форму списка регистра сведений Счета учета расчетов с контрагентами</div>
<div class="sunk" style="left:1212px;top:975px;width:29px;height:18px"></div><div class="t" style="left:1216px;top:977px;color:#9a9888;letter-spacing:-.8px" id="cap">CAP</div>
<div class="sunk" style="left:1246px;top:975px;width:30px;height:18px"></div><div class="t" style="left:1250px;top:977px;letter-spacing:-.6px" id="num">NUM</div>
<!-- taskbar -->
<div class="a" style="left:0;top:994px;width:1280px;height:30px;background:#d4d0c8;border-top:1px solid #ebe5d9;box-shadow:inset 0 1px 0 #fff"></div>
<div class="tk" style="left:2px;width:51px"><svg style="left:2px;top:2px" width="14" height="13" viewBox="0 0 14 13" ><path d="M1 1.500q2.500-1.500 5 0v4.500q-2.500-1.500-5 0z" fill="#e8502c"/><path d="M7.500 1.500q2.500 1.500 5.500 0v4.500q-3 1.500-5.500 0z" fill="#6cb82c"/><path d="M1 7.500q2.500-1.500 5 0v4.500q-2.500-1.500-5 0z" fill="#2c6cd8"/><path d="M7.500 7.500q2.500 1.500 5.500 0v4.500q-3 1.500-5.500 0z" fill="#f0c020"/></svg><span class="b" style="left:19px;letter-spacing:.5px" id="start">Пуск</span></div>
<div class="a" style="left:60px;top:1000px;width:3px;height:19px;background:#d4d0c8;border:1px solid;border-color:#fff #808080 #808080 #fff"></div>
<div class="a" style="left:194px;top:1000px;width:3px;height:19px;background:#d4d0c8;border:1px solid;border-color:#fff #808080 #808080 #fff"></div>
<div class="a" style="left:1052px;top:1000px;width:3px;height:19px;background:#d4d0c8;border:1px solid;border-color:#fff #808080 #808080 #fff"></div>
<div class="a" style="left:1083px;top:999px;width:2px;height:21px;border-left:1px solid #808080;border-right:1px solid #fff"></div>
<svg style="left:69px;top:1001px" width="16" height="16" viewBox="0 0 16 16" ><rect x="1" y="2" width="14" height="13" rx="3" fill="#2c7cc8" transform="rotate(-8 8 8)"/><rect x="4" y="4" width="8" height="9" fill="#fff" transform="rotate(-8 8 8)"/><path d="M6 9h4V6.500L13 9.500 10 12V10.500H6z" fill="#1c5ca8"/></svg>
<svg style="left:93px;top:1001px" width="15" height="16" viewBox="0 0 15 16" ><circle cx="7.500" cy="8.500" r="7" fill="#5c8cc8"/><circle cx="7.500" cy="8.500" r="4.500" fill="#8cb4e0"/><path d="M7.500 1v15M1 8.500h13" stroke="#3c6ca8" stroke-width=".8"/><rect x="6" y="0" width="3" height="2" fill="#7c98b8"/></svg>
<svg style="left:116px;top:1001px" width="15" height="16" viewBox="0 0 15 16" ><rect x="0.500" y="0.500" width="11" height="11" rx="2" fill="#fbe8c8" stroke="#e8a048"/><circle cx="8.500" cy="9.500" r="6" fill="#fdf0d0" stroke="#e89838"/><path d="M6 8l2.500 2.500L11.500 8" fill="none" stroke="#d8a020" stroke-width="1.500"/></svg>
<svg style="left:139px;top:1001px" width="16" height="16" viewBox="0 0 16 16" ><circle cx="8" cy="8" r="7.500" fill="#e86c10"/><circle cx="8.500" cy="7" r="4.500" fill="#2c4cb0"/><path d="M1 6q-1 8 7 9.500 7-1 7.500-8-2 5-7 4.500T3 6z" fill="#f09018"/><path d="M8 4q2 1 1.500 3.500L8 9z" fill="#6c9ce0"/></svg>
<svg style="left:162px;top:1001px" width="16" height="16" viewBox="0 0 16 16" ><path d="M13.200 9.500A5.200 5.200 0 1 0 11.800 12.800" fill="none" stroke="#2c84d8" stroke-width="2.800"/><rect x="3.500" y="8" width="10.800" height="2.400" fill="#2c84d8"/><path d="M1.500 13.500Q-1 9 5.500 4 11.500 0 15.500 2" fill="none" stroke="#f0b820" stroke-width="1.600"/></svg>
<div class="tk" style="left:202px;background:#f0eee8;border-color:#404040 #fff #fff #404040;box-shadow:inset 1px 1px 0 #808080"><svg style="left:5px;top:3px" width="16" height="16" viewBox="0 0 16 16" ><rect x="0" y="0" width="16" height="16" rx="2" fill="#ffe11a" stroke="#c9a800" stroke-width="1"/><text x="8.0" y="7.5" font-family="Liberation Sans,sans-serif" font-weight="bold" font-size="8" fill="#d8121a" text-anchor="middle">1C</text><text x="8.0" y="14.5" font-family="Liberation Sans,sans-serif" font-size="8" fill="#b08a00" text-anchor="middle">v8</text></svg><span class="b" style="left:24px;top:5px;letter-spacing:.23px" id="tk0">1С:Предприя...</span></div>
<div class="tk" style="left:322px"><svg style="left:4px;top:2px" width="16" height="16" viewBox="0 0 16 16" ><path d="M13.200 9.500A5.200 5.200 0 1 0 11.800 12.800" fill="none" stroke="#2c84d8" stroke-width="2.800"/><rect x="3.500" y="8" width="10.800" height="2.400" fill="#2c84d8"/><path d="M1.500 13.500Q-1 9 5.500 4 11.500 0 15.500 2" fill="none" stroke="#f0b820" stroke-width="1.600"/></svg><span id="tk1">Письмо "Ответ...</span></div>
<div class="tk" style="left:442px"><svg style="left:4px;top:2px" width="16" height="16" viewBox="0 0 16 16" ><path d="M13.200 9.500A5.200 5.200 0 1 0 11.800 12.800" fill="none" stroke="#2c84d8" stroke-width="2.800"/><rect x="3.500" y="8" width="10.800" height="2.400" fill="#2c84d8"/><path d="M1.500 13.500Q-1 9 5.500 4 11.500 0 15.500 2" fill="none" stroke="#f0b820" stroke-width="1.600"/></svg><span id="tk2">1С:Бухгалтери...</span></div>
<div class="tk" style="left:562px"><svg style="left:4px;top:2px" width="16" height="16" viewBox="0 0 16 16" ><path d="M4.500 0.500H12L15.500 4V15.500H4.500Z" fill="#fff" stroke="#8c9c8c"/><path d="M7 6h7M7 8h7M7 10h7M7 12h7" stroke="#b8c8b8"/><rect x="0" y="3" width="10" height="9" fill="#2c8c3c"/><path d="M2.500 5l5 5M7.500 5l-5 5" stroke="#fff" stroke-width="1.600"/></svg><span id="tk3">ТНт № 441 от ...</span></div>
<div class="tk" style="left:682px"><svg style="left:4px;top:2px" width="16" height="16" viewBox="0 0 16 16" ><path d="M4.500 0.500H12L15.500 4V15.500H4.500Z" fill="#fff" stroke="#8c9c8c"/><path d="M7 6h7M7 8h7M7 10h7M7 12h7" stroke="#b8c8b8"/><rect x="0" y="3" width="10" height="9" fill="#2c8c3c"/><path d="M2.500 5l5 5M7.500 5l-5 5" stroke="#fff" stroke-width="1.600"/></svg><span id="tk4">ТНт № 449 от ...</span></div>
<div class="tk" style="left:802px"><svg style="left:4px;top:2px" width="16" height="14" viewBox="0 0 16 14" ><path d="M0.500 2.500q0-2 2-2h3l2 2h6q2 0 2 2v7q0 2-2 2h-11q-2 0-2-2z" fill="#f8d868" stroke="#c89818"/><path d="M1 5h14" stroke="#fff0a8"/></svg><span id="tk5">Безвозмездная...</span></div>
<div class="tk" style="left:922px"><svg style="left:4px;top:2px" width="14" height="17" viewBox="0 0 14 17" ><path d="M2 7h10l-1.500 9.500h-7z" fill="#d8a878" stroke="#a87848"/><path d="M4 8L2 0.500" stroke="#d83828" stroke-width="1.800"/><path d="M7 8V0" stroke="#3868d8" stroke-width="1.800"/><path d="M10 8l2-7" stroke="#e8b828" stroke-width="1.800"/><path d="M3 10h8" stroke="#7898d8" stroke-width="2"/></svg><span id="tk6">БП_2 - Paint</span></div>
<div class="a" style="left:1063px;top:1002px;width:16px;height:16px;background:#1c2c80;color:#fff;text-align:center;line-height:16px" id="ru">RU</div>
<div class="sunk" style="left:1090px;top:998px;width:187px;height:23px;border-color:#808080 #fff #fff #808080"></div>
<div class="t" style="left:1243px;top:1003px" id="clock">17:49</div>
<svg style="left:1093px;top:1002px" width="16" height="16" viewBox="0 0 16 16" ><rect x="0" y="0" width="16" height="16" rx="2" fill="#e8781c"/><path d="M4 9h7v2q0 2-2 2H6q-2 0-2-2z" fill="none" stroke="#fff" stroke-width="1.200"/><path d="M3 14.500h10" stroke="#fff"/><path d="M6 7q-1.500-2 1-3.500M9 7q-1.500-2 1-3.500" fill="none" stroke="#fff"/></svg>
<svg style="left:1111px;top:1002px" width="15" height="16" viewBox="0 0 15 16" ><rect x="0" y="0" width="15" height="16" fill="#fff"/><path d="M0 0h4v7l5-7h5L8 8l6 8H9L4 9v7H0z" fill="#e01020"/><path d="M8 9l6 6v-4M14 15h-4" stroke="#000" stroke-width="2" fill="none"/></svg>
<svg style="left:1130px;top:1002px" width="14" height="16" viewBox="0 0 14 16" ><path d="M2 1l5 2 5-2-1 5-4 3-4-3z" fill="#38a838"/><rect x="2" y="9" width="11" height="6" fill="#788878" transform="rotate(-15 7 12)"/><rect x="4" y="10.500" width="7" height="3" fill="#d8e0d8" transform="rotate(-15 7 12)"/></svg>
<svg style="left:1147px;top:1002px" width="15" height="16" viewBox="0 0 15 16" ><rect x="5" y="0" width="9" height="9" fill="#5c6cb8"/><rect x="6" y="1" width="7" height="6" fill="#8c9cd8"/><rect x="0" y="5" width="10" height="9" fill="#3c4c98"/><rect x="1" y="6" width="8" height="6" fill="#6c7cc8"/><rect x="2" y="14" width="6" height="2" fill="#787898"/></svg>
<svg style="left:1166px;top:1002px" width="15" height="16" viewBox="0 0 15 16" ><rect x="0" y="0" width="15" height="16" rx="2" fill="#1c8cd8"/><circle cx="7.500" cy="7" r="5" fill="#fff"/><path d="M4 7l2-2v1.300h3V5l2 2-2 2V7.700H6V9z" fill="#1c6cc8"/></svg>
<svg style="left:1183px;top:1002px" width="16" height="16" viewBox="0 0 16 16" ><ellipse cx="8" cy="8" rx="8" ry="7.500" fill="#78c828"/><path d="M4 7.500l3 3 5-5.500" fill="none" stroke="#fff" stroke-width="2.500"/></svg>
<svg style="left:1201px;top:1002px" width="16" height="14" viewBox="0 0 16 14" ><path d="M0 8l9-2 2-6h2l-1 6 4 0.500v1.500l-4 0.500 1 5h-2l-2-5-9-1z" fill="#e8e040"/></svg>
<svg style="left:1219px;top:1002px" width="16" height="16" viewBox="0 0 16 16" ><rect x="0" y="0" width="10" height="8" fill="#d82818"/><rect x="2" y="8" width="6" height="2" fill="#782018"/><rect x="5" y="5" width="11" height="9" fill="#181818"/><rect x="6" y="6" width="9" height="6" fill="#38b838"/><rect x="8" y="14" width="6" height="2" fill="#282828"/></svg>
</body></html>
